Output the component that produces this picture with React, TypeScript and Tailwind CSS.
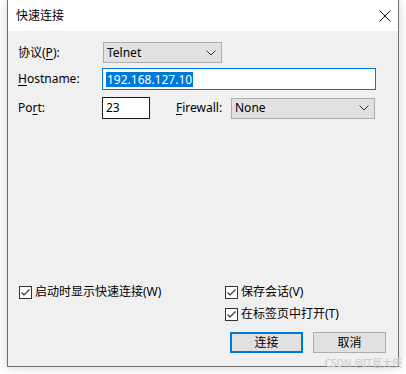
import React from 'react';

const font = "font-['Noto_Sans','Noto_Sans_CJK_SC',sans-serif]";

const Chevron: React.FC = () => (
  <svg width="10" height="6" viewBox="0 0 10 6" className="shrink-0">
    <polyline points="0.5,0.5 5,5 9.5,0.5" fill="none" stroke="#333" strokeWidth="1" />
  </svg>
);

const Check: React.FC<{ label: React.ReactNode }> = ({ label }) => (
  <div className="flex items-center h-4">
    <span className="w-[13px] h-[13px] border border-[#333] bg-white flex items-center justify-center">
      <svg width="11" height="11" viewBox="0 0 11 11">
        <polyline points="1.5,5.5 4,8 9.5,2.5" fill="none" stroke="#333" strokeWidth="1.2" />
      </svg>
    </span>
    <span className="ml-[3px] text-[12px] text-black leading-none">{label}</span>
  </div>
);

export default function App() {
  return (
    <div className={`relative w-[406px] h-[374px] bg-white ${font}`}>
      {/* Dialog window */}
      <div className="ml-[7px] w-[392px] h-[367px] flex flex-col border-x border-b border-[#6f6f6f] shadow-[0_0_10px_rgba(0,0,0,0.18)] bg-[#f0f0f0]">
        {/* Title bar */}
        <div className="h-[31px] bg-white flex items-center justify-between pl-[8px] pr-[7px]">
          <span className="text-[12px] text-black">快速连接</span>
          <svg width="12" height="12" viewBox="0 0 12 12">
            <path d="M0.5 0.5 L11.5 11.5 M11.5 0.5 L0.5 11.5" stroke="#111" strokeWidth="1" />
          </svg>
        </div>

        {/* Body */}
        <div className="flex-1 flex flex-col pl-[10px] text-[12px] text-black">
          <div className="mt-[11px] h-[21px] flex items-center">
            <span className="w-[85px]">
              协议(<span className="underline underline-offset-2">P</span>):
            </span>
            <div className="w-[119px] h-[21px] bg-[#e1e1e1] border border-[#adadad] flex items-center justify-between pl-[3px] pr-[5px]">
              <span>Telnet</span>
              <Chevron />
            </div>
          </div>

          <div className="mt-[5px] h-[22px] flex items-center">
            <span className="w-[84px]">
              <span className="underline underline-offset-2">H</span>ostname:
            </span>
            <div className="w-[274px] h-[22px] bg-white border border-[#0078d7] flex items-center pl-[3px]">
              <span className="bg-[#0078d7] text-white leading-[15px] px-px">192.168.127.10</span>
            </div>
          </div>

          <div className="mt-[7px] h-[22px] flex items-center">
            <span className="w-[84px]">
              Po<span className="underline underline-offset-2">r</span>t:
            </span>
            <div className="w-[48px] h-[22px] bg-white border border-[#1a1a1a] flex items-center pl-[3px]">
              23
            </div>
            <span className="ml-[26px] w-[55px]">
              <span className="underline underline-offset-2">F</span>irewall:
            </span>
            <div className="w-[144px] h-[21px] bg-[#e1e1e1] border border-[#adadad] flex items-center justify-between pl-[3px] pr-[5px]">
              <span>None</span>
              <Chevron />
            </div>
          </div>

          {/* Bottom options */}
          <div className="mt-auto mb-[13px] flex">
            <div className="w-[207px] pl-px">
              <Check label="启动时显示快速连接(W)" />
            </div>
            <div className="flex flex-col">
              <Check label="保存会话(V)" />
              <div className="mt-[6px]">
                <Check label="在标签页中打开(T)" />
              </div>
              <div className="mt-[10px] ml-[5px] flex gap-[10px]">
                <button className="w-[73px] h-[21px] bg-[#e1e1e1] border-2 border-[#0078d7] text-[12px] flex items-center justify-center">
                  连接
                </button>
                <button className="w-[73px] h-[21px] bg-[#e1e1e1] border border-[#adadad] text-[12px] flex items-center justify-center">
                  取消
                </button>
              </div>
            </div>
          </div>
        </div>
      </div>

      {/* Watermark */}
      <span className="absolute right-[4px] bottom-[6px] text-[10px] text-[#c9c9c9] leading-none">CSDN @IT葛大侠</span>
    </div>
  );
}
